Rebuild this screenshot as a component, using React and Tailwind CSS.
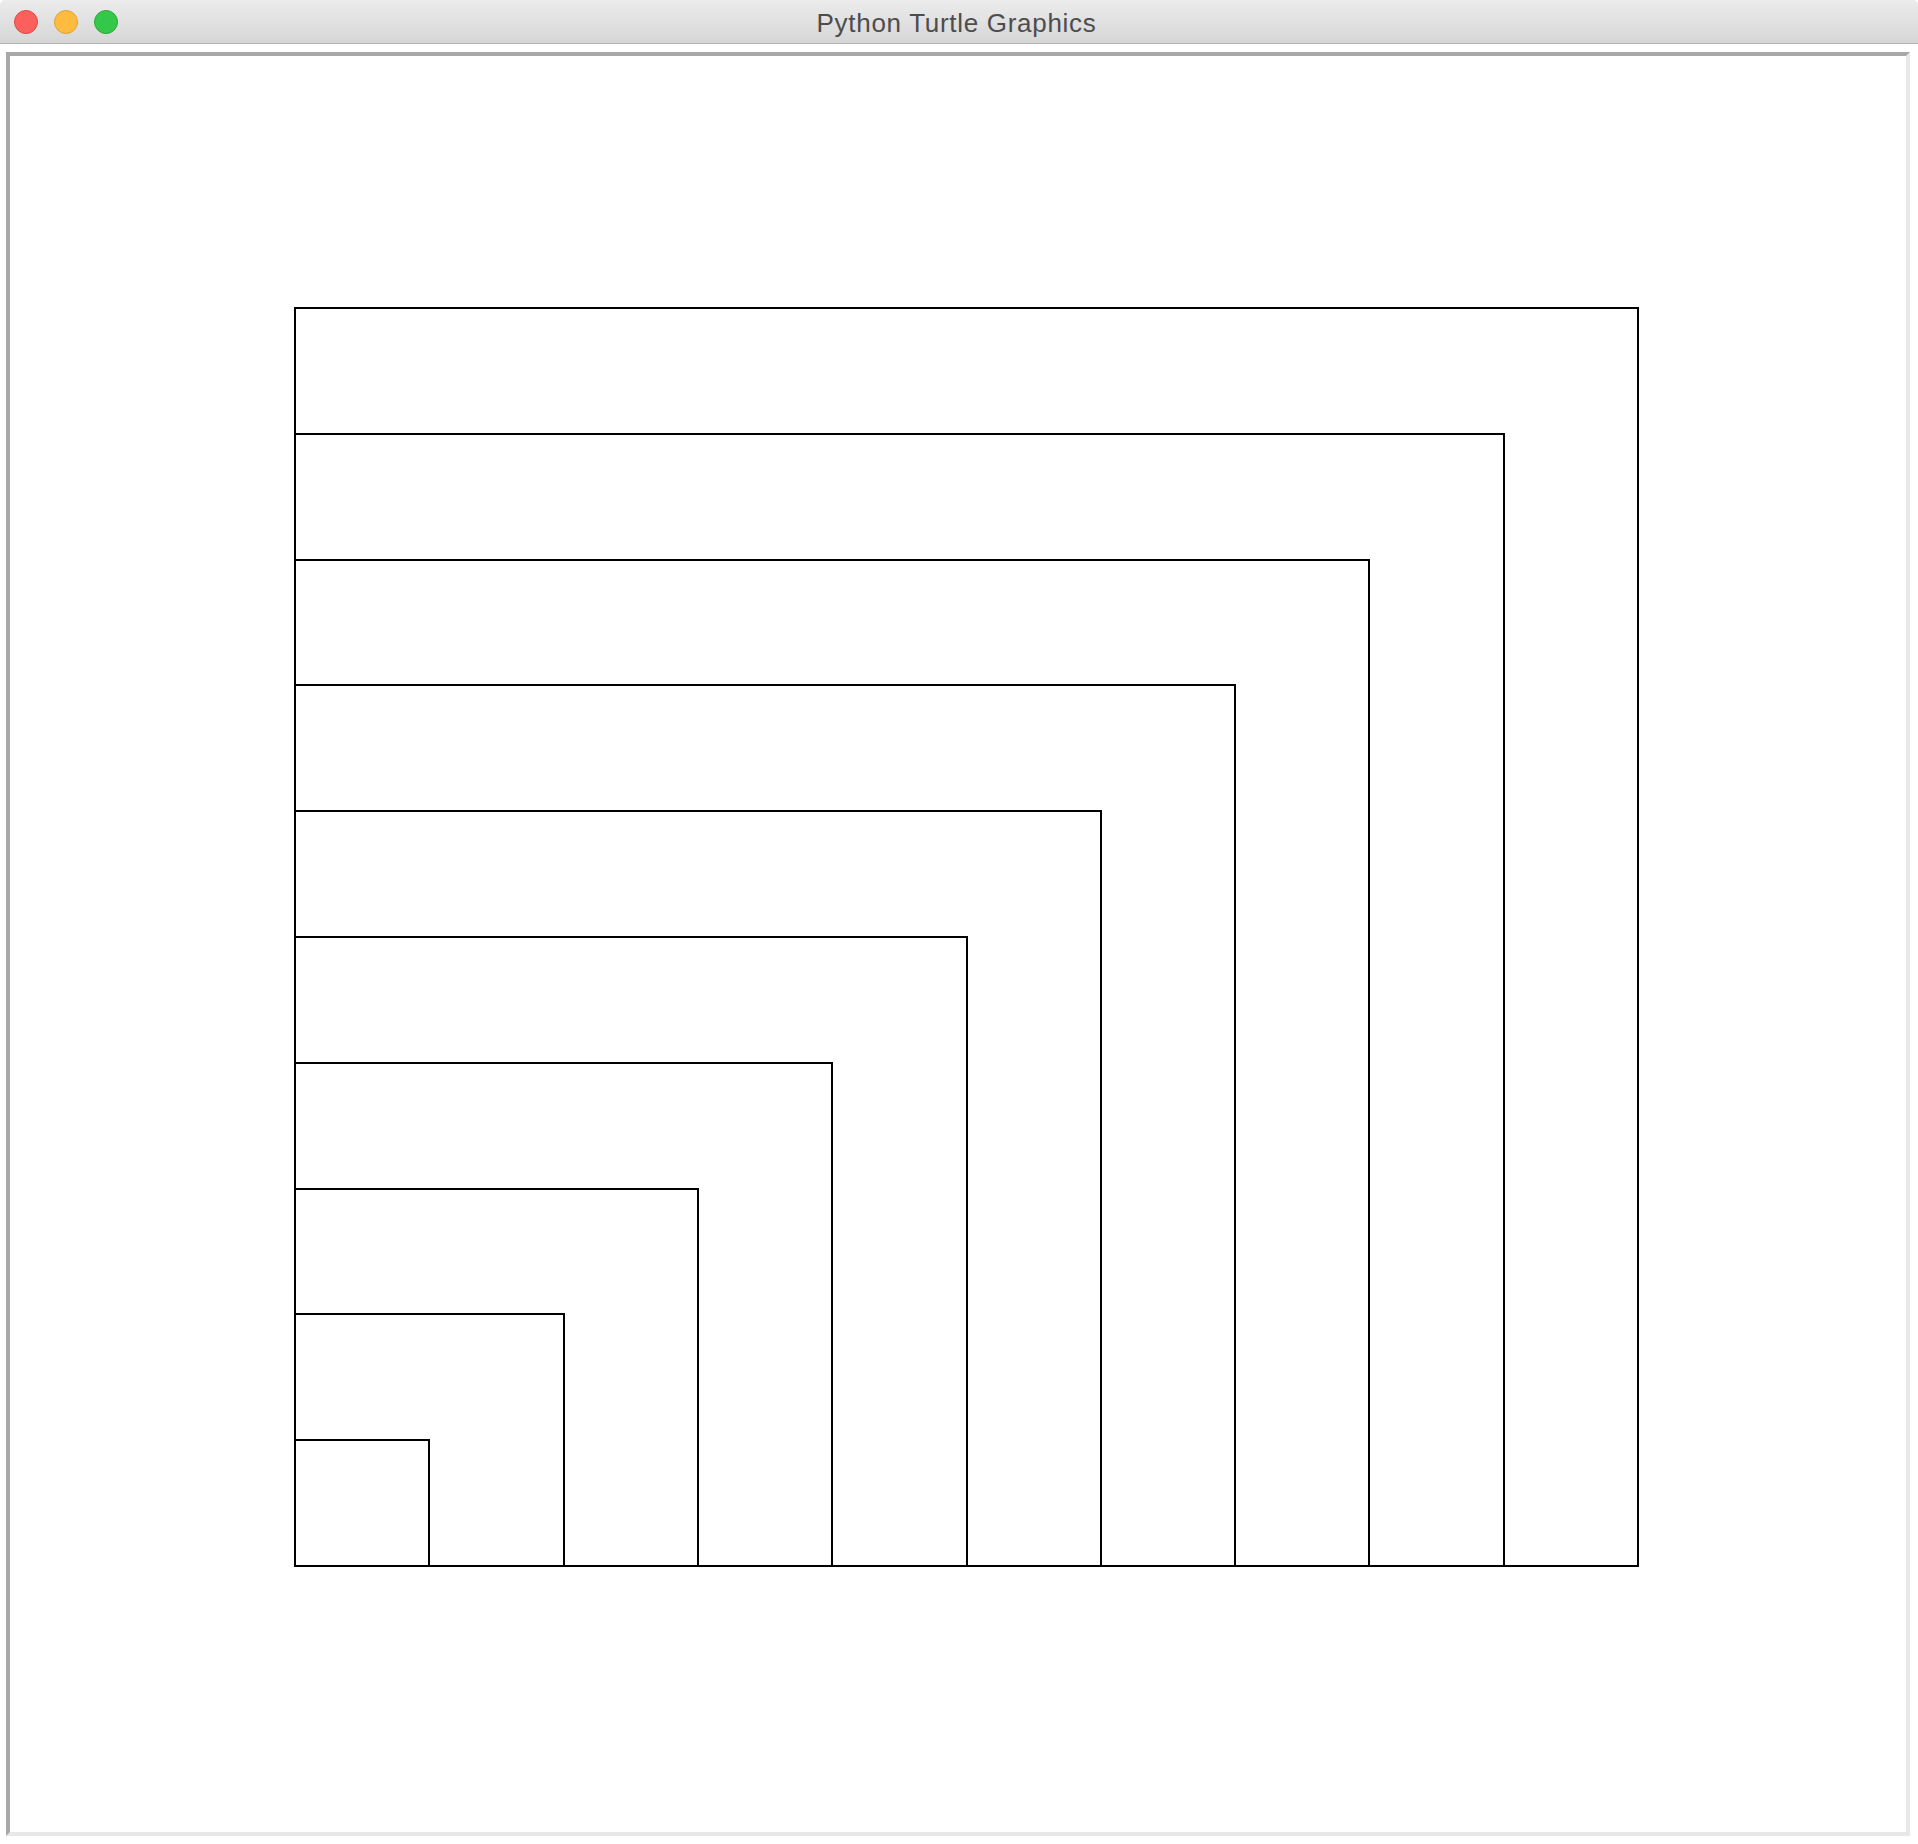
const steps = [1, 2, 3, 4, 5, 6, 7, 8, 9, 10];

// nested rectangles share the bottom-left corner (page coords)
const left = 295;
const bottom = 1566;
const dx = 134.3;
const dy = 125.8;

function TrafficLight({ color }) {
    return <span className={`block h-[24px] w-[24px] rounded-full border ${color}`} />;
}

export default function App() {
    return (
        <div className="flex h-[1844px] w-[1918px] flex-col bg-white" style={{ fontFamily: '"Liberation Sans", Arial, sans-serif' }}>
            <div className="relative flex h-[44px] w-full shrink-0 items-center rounded-t-[5px] border-b border-[#b3b3b3] bg-gradient-to-b from-[#ececec] to-[#d6d6d6]">
                <div className="flex items-center gap-[16px] pl-[14px]">
                    <TrafficLight color="bg-[#fc605c] border-[#de4a46]" />
                    <TrafficLight color="bg-[#fdbc40] border-[#dea236]" />
                    <TrafficLight color="bg-[#34c84a] border-[#27aa35]" />
                </div>
                <div className="absolute inset-0 flex items-center justify-center pr-[5px] pt-[3px] text-[26px] tracking-[0.7px] text-[#4d4d4d]">
                    Python Turtle Graphics
                </div>
            </div>

            <div className="ml-[6px] mt-[8px] h-[1784px] w-[1904px] border-4 border-l-[#a8a8a8] border-t-[#a8a8a8] border-r-[#e8e8e8] border-b-[#e8e8e8] bg-white">
                <svg width="1896" height="1776" viewBox="10 56 1896 1776" className="block">
                    {steps.map((i) => {
                        const right = Math.round(left + dx * i);
                        const top = Math.round(bottom - dy * i);
                        return (
                            <rect
                                key={i}
                                x={left}
                                y={top}
                                width={right - left}
                                height={bottom - top}
                                fill="none"
                                stroke="#000"
                                strokeWidth="2"
                                shapeRendering="crispEdges"
                            />
                        );
                    })}
                </svg>
            </div>
        </div>
    );
}
